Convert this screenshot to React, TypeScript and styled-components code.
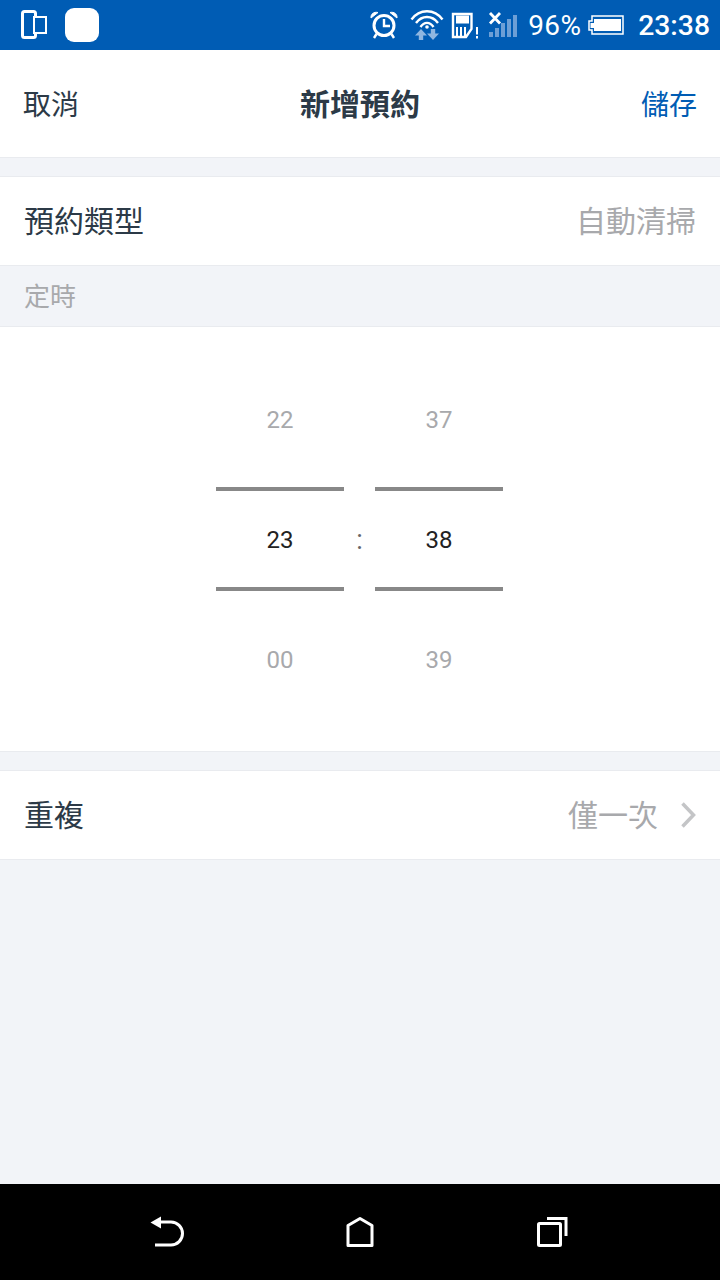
import React from 'react';
import styled, {createGlobalStyle} from 'styled-components';

const GlobalStyle = createGlobalStyle`
    html, body {
        margin: 0;
        padding: 0;
        background: #f2f4f8;
    }
    body {
        font-family: Roboto, "Noto Sans CJK TC", sans-serif;
    }
`;

const Page = styled.div`
    width: 720px;
    height: 1280px;
    display: flex;
    flex-direction: column;
    overflow: hidden;
    background: #f2f4f8;
`;

const StatusBar = styled.div`
    height: 50px;
    flex: none;
    display: flex;
    align-items: center;
    background: #005cb4;
    padding: 0 10px 0 20px;
    color: #fff;
`;

const StatusLeft = styled.div`
    display: flex;
    align-items: center;
    gap: 15px;
    flex: 1;
`;

const AppBlank = styled.div`
    width: 34px;
    height: 34px;
    border-radius: 9px;
    background: #fff;
`;

const StatusRight = styled.div`
    display: flex;
    align-items: center;
`;

const StatusIcon = styled.svg<{ $gap?: number }>`
    display: block;
    margin-right: ${props => props.$gap || 0}px;
`;

const BatteryText = styled.span`
    font-size: 28px;
    letter-spacing: 0.3px;
    margin-left: 10px;
    margin-right: 7px;
`;

const ClockText = styled.span`
    font-size: 28.3px;
    font-weight: 500;
    margin-left: 14px;
`;

const Header = styled.header`
    height: 108px;
    flex: none;
    box-sizing: border-box;
    display: flex;
    align-items: center;
    justify-content: space-between;
    padding: 0 23px 2px;
    background: #fff;
    border-bottom: 1px solid #e9ebef;
    position: relative;
`;

const HeaderAction = styled.span<{ $primary?: boolean }>`
    font-size: 28px;
    color: ${props => props.$primary ? '#005cb4' : '#2c3a47'};
`;

const HeaderTitle = styled.h1`
    margin: 0 0 2px;
    font-size: 30px;
    font-weight: 700;
    color: #2c3a47;
    position: absolute;
    left: 300px;
`;

const Row = styled.div`
    height: 90px;
    flex: none;
    box-sizing: border-box;
    margin-top: 18px;
    display: flex;
    align-items: center;
    justify-content: space-between;
    padding: 0 24px 4px 24px;
    background: #fff;
    border-top: 1px solid #e9ebef;
    border-bottom: 1px solid #e9ebef;
`;

const RowLabel = styled.span`
    font-size: 30px;
    color: #2c3a47;
`;

const RowValue = styled.span`
    display: flex;
    align-items: center;
    gap: 22px;
    font-size: 30px;
    color: #a8a9ac;
`;

const Chevron = styled.svg`
    display: block;
    margin-top: 3px;
`;

const SectionLabel = styled.div`
    height: 60px;
    flex: none;
    box-sizing: border-box;
    display: flex;
    align-items: center;
    padding: 0 0 4px 24px;
    font-size: 26px;
    color: #a8a9ac;
`;

const Picker = styled.section`
    height: 426px;
    flex: none;
    box-sizing: border-box;
    display: flex;
    justify-content: center;
    padding-top: 33px;
    background: #fff;
    border-top: 1px solid #e9ebef;
    border-bottom: 1px solid #e9ebef;
`;

const PickerInner = styled.div`
    display: flex;
    margin-left: -1px;
`;

const Wheel = styled.div`
    width: 128px;
    display: flex;
    flex-direction: column;
`;

const WheelItem = styled.div<{ $active?: boolean }>`
    height: 120px;
    position: relative;
    display: flex;
    align-items: center;
    justify-content: center;
    font-size: 24px;
    color: ${props => props.$active ? '#222' : '#a8a9ac'};
    ${props => props.$active && `
        &::before, &::after {
            content: "";
            position: absolute;
            left: 0;
            right: 0;
            height: 4px;
            background: #888;
        }
        &::before { top: 7px; }
        &::after { bottom: 9px; }
    `}
`;

const Colon = styled.div`
    width: 31px;
    height: 120px;
    margin-top: 120px;
    display: flex;
    align-items: center;
    justify-content: center;
    font-size: 27px;
    color: #666;
`;

const Filler = styled.div`
    flex: 1;
`;

const NavBar = styled.nav`
    height: 96px;
    flex: none;
    display: flex;
    align-items: center;
    background: #000;
    padding-left: 150px;
`;

const NavSlot = styled.div<{ $w: number }>`
    width: ${props => props.$w}px;
    display: flex;
`;

const PhonesIcon = () => (
    <StatusIcon width="30" height="30" viewBox="0 0 30 30" fill="none" stroke="#fff">
        <rect x="2.500" y="1.500" width="13" height="26" rx="2" strokeWidth="3"/>
        <rect x="14" y="7" width="12" height="16" fill="#005cb4" strokeWidth="2"/>
    </StatusIcon>
);

const AlarmIcon = () => (
    <StatusIcon $gap={11} width="30" height="30" viewBox="0 0 30 30" fill="none" stroke="#fff">
        <circle cx="15" cy="15.500" r="10" strokeWidth="3"/>
        <path d="M15 9v7h6" strokeWidth="2.400"/>
        <path d="M2 8C1.500 4 5 1.500 9 2.500ZM28 8C28.500 4 25 1.500 21 2.500Z" fill="#fff" strokeWidth="1"/>
        <path d="M7.500 24l-2.500 4M22.500 24l2.500 4" strokeWidth="2.400"/>
    </StatusIcon>
);

const WifiIcon = () => (
    <StatusIcon $gap={7} width="34" height="32" viewBox="0 0 34 32" fill="none" stroke="#fff" strokeWidth="2.400">
        <path d="M1.500 10.500C9.500 -.5 24.500 -.5 32.500 10.500"/>
        <path d="M6 14C12 6 22 6 28 14"/>
        <path d="M10.500 18C14 12.500 20 12.500 23.500 18"/>
        <circle cx="17" cy="18" r="1.800" fill="#fff" stroke="none"/>
        <path d="M11 20l-6 6.500h3.800V31h4.400v-4.500H17zM23 31l6-6.500h-3.800V20h-4.400v4.500H17z" fill="#8fb6e0" stroke="none"/>
    </StatusIcon>
);

const SimIcon = () => (
    <StatusIcon $gap={7} width="30" height="30" viewBox="0 0 30 30" fill="none">
        <path d="M2 4h18.500v15L15 27H2z" stroke="#fff" strokeWidth="2.400"/>
        <rect x="5" y="5.500" width="13" height="8" fill="#fff"/>
        <path d="M6 17v9M10 17v9M14 17v9" stroke="#fff" strokeWidth="2"/>
        <path d="M26 17v7.500M26 26v2.500" stroke="#fff" strokeWidth="2"/>
    </StatusIcon>
);

const SignalIcon = () => (
    <StatusIcon width="30" height="30" viewBox="0 0 30 30" fill="none">
        <path d="M2 3l10 10.500M12 3L2 13.500" stroke="#fff" strokeWidth="2.800"/>
        <path d="M1 22h4v5H1zM7 18h4v9H7zM13 13h4v14h-4zM19 9h4v18h-4zM25 5h4v22h-4z" fill="#6d9fd6"/>
    </StatusIcon>
);

const BatteryIcon = () => (
    <StatusIcon width="36" height="20" viewBox="0 0 36 20" fill="none">
        <path d="M4 1h31v18H4v-4H1V6h3z" stroke="#fff" strokeWidth="1.500"/>
        <rect x="6" y="4" width="27" height="12" fill="#fff"/>
        <rect x="2.500" y="8" width="3.500" height="5" fill="#fff"/>
    </StatusIcon>
);

const ChevronIcon = () => (
    <Chevron width="16" height="26" viewBox="0 0 16 26" fill="none" stroke="#c4c5c7" strokeWidth="3.500">
        <path d="M2.500 1.500L13.500 13 2.500 24.500"/>
    </Chevron>
);

const BackIcon = () => (
    <svg width="36" height="32" viewBox="0 0 36 32" fill="none">
        <path d="M.5 6.500L11 .5v12z" fill="#fff"/>
        <path d="M10 6h11a11.500 11.500 0 0 1 0 23H5" stroke="#fff" strokeWidth="3"/>
    </svg>
);

const HomeIcon = () => (
    <svg width="30" height="32" viewBox="0 0 30 32" fill="none" stroke="#fff" strokeWidth="3" strokeLinejoin="round">
        <path d="M15 2.500L3 9.500V29.500H27V9.500Z"/>
    </svg>
);

const RecentIcon = () => (
    <svg width="34" height="32" viewBox="0 0 34 32" fill="none" stroke="#fff" strokeWidth="3">
        <rect x="2.500" y="7.500" width="22" height="22" rx="1"/>
        <path d="M11 2.500H30V20"/>
    </svg>
);

export default function App() {
    return (
        <Page>
            <GlobalStyle/>
            <StatusBar>
                <StatusLeft>
                    <PhonesIcon/>
                    <AppBlank/>
                </StatusLeft>
                <StatusRight>
                    <AlarmIcon/>
                    <WifiIcon/>
                    <SimIcon/>
                    <SignalIcon/>
                    <BatteryText>96%</BatteryText>
                    <BatteryIcon/>
                    <ClockText>23:38</ClockText>
                </StatusRight>
            </StatusBar>
            <Header>
                <HeaderAction>取消</HeaderAction>
                <HeaderTitle>新增預約</HeaderTitle>
                <HeaderAction $primary>儲存</HeaderAction>
            </Header>
            <Row>
                <RowLabel>預約類型</RowLabel>
                <RowValue>自動清掃</RowValue>
            </Row>
            <SectionLabel>定時</SectionLabel>
            <Picker>
                <PickerInner>
                    <Wheel>
                        <WheelItem>22</WheelItem>
                        <WheelItem $active>23</WheelItem>
                        <WheelItem>00</WheelItem>
                    </Wheel>
                    <Colon>:</Colon>
                    <Wheel>
                        <WheelItem>37</WheelItem>
                        <WheelItem $active>38</WheelItem>
                        <WheelItem>39</WheelItem>
                    </Wheel>
                </PickerInner>
            </Picker>
            <Row>
                <RowLabel>重複</RowLabel>
                <RowValue>僅一次<ChevronIcon/></RowValue>
            </Row>
            <Filler/>
            <NavBar>
                <NavSlot $w={195}><BackIcon/></NavSlot>
                <NavSlot $w={191}><HomeIcon/></NavSlot>
                <NavSlot $w={40}><RecentIcon/></NavSlot>
            </NavBar>
        </Page>
    );
}
